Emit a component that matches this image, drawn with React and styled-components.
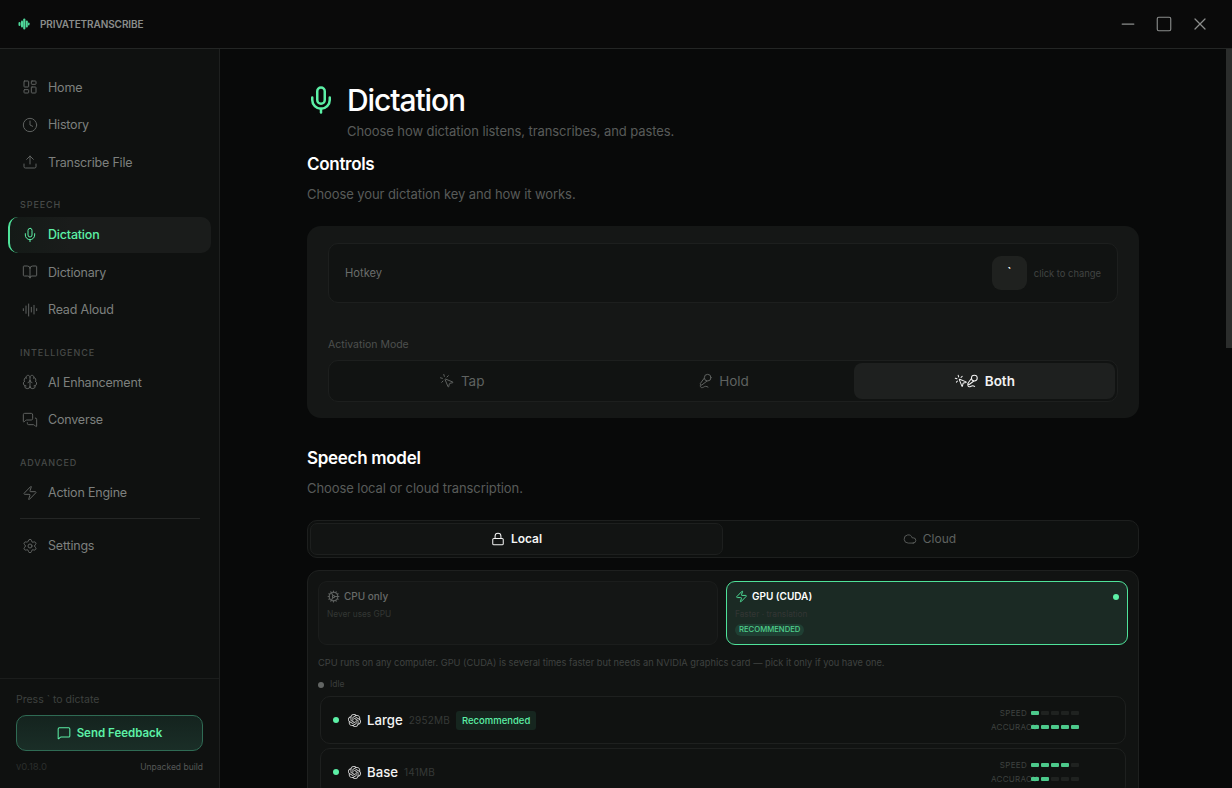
import React from "react";
import styled, { createGlobalStyle } from "styled-components";
import {
  LayoutDashboard, Clock, Upload, Mic, BookOpen, AudioLines, Brain, MessagesSquare, Zap, Settings,
  MessageSquare, Lock, Cloud, Cog, MousePointerClick, MicVocal, Minus, Square, X,
} from "lucide-react";
import { SiOpenai } from "react-icons/si";

const Global = createGlobalStyle`
  * { box-sizing: border-box; }
  html, body { margin: 0; height: 100%; background: #080909; overflow: hidden; }
  body { font-family: Inter, "Noto Sans", sans-serif; color: #fff; }
  #root { height: 100%; }
`;

const Shell = styled.div`
  width: 100%; height: 100vh; display: flex; flex-direction: column; background: #080909;
`;
const TitleBar = styled.header`
  height: 49px; flex: none; display: flex; align-items: center; justify-content: space-between;
  padding: 0 14px 0 18px; background: #0a0a0a; border-bottom: 1px solid #242625;
`;
const Brand = styled.div`
  display: flex; align-items: center; gap: 10px; color: #8a8d8b; font-size: 10px; font-weight: 600; letter-spacing: -0.1px;
  svg { color: #4fd89a; }
`;
const WinControls = styled.div`display: flex;`;
const WinButton = styled.button`
  width: 36px; height: 36px; border: 0; padding: 0; background: none; color: #8b8d8c;
  display: flex; align-items: center; justify-content: center;
`;
const Body = styled.div`flex: 1; min-height: 0; display: flex;`;
const Sidebar = styled.aside`
  width: 220px; flex: none; display: flex; flex-direction: column; background: #0f1110; border-right: 1px solid #1e201f;
`;
const Nav = styled.nav`flex: 1; padding: 20px 8px 0; display: flex; flex-direction: column; gap: 1.5px;`;
const NavItem = styled.div`
  height: 36px; flex: none; display: flex; align-items: center; gap: 10px; padding-left: 12px;
  font-size: 12.5px; font-weight: ${(p) => (p.$active ? 500 : 400)}; letter-spacing: -0.2px;
  color: ${(p) => (p.$active ? "#5cf0a6" : "#7d807e")};
  border-radius: 10px;
  border-left: 2px solid ${(p) => (p.$active ? "#4fe39a" : "transparent")};
  background: ${(p) => (p.$active ? "linear-gradient(90deg,#141a17,#1a1c1b 30%)" : "none")};
  svg { color: ${(p) => (p.$active ? "#5cf0a6" : "#5f6260")}; flex: none; }
`;
const SectionLabel = styled.div`
  font-size: 9px; font-weight: 500; letter-spacing: 0.9px; color: #474a48; padding: 17.5px 0 5.2px 12px; line-height: 11px;
`;
const NavRule = styled.div`height: 1px; background: #242625; margin: 6px 11px 7px 12px; flex: none;`;
const SideFoot = styled.div`
  height: 110px; flex: none; border-top: 1px solid #1b1d1c; padding: 14px 16px 0; display: flex; flex-direction: column;
`;
const PressHint = styled.div`font-size: 10.5px; color: #3e413f; line-height: 13px;`;
const FeedbackButton = styled.button`
  margin-top: 9px; width: 187px; height: 36px; border-radius: 10px; border: 1px solid #2f6b54;
  background: linear-gradient(180deg,#14231e,#1a2e27); color: #5cf0a6; font: 600 11.5px Inter, sans-serif;
  display: flex; align-items: center; justify-content: center; gap: 6px;
`;
const FootMeta = styled.div`
  margin-top: 10px; display: flex; justify-content: space-between; align-items: center; font-size: 8.5px; line-height: 12px; color: #555856;
`;
const Version = styled.span`font-size: 9.5px; color: #2b2e2c;`;

const MainWrap = styled.div`flex: 1; min-width: 0; position: relative; background: #080909;`;
const Main = styled.main`height: 100%; overflow: hidden; padding-right: 6px;`;
const ScrollThumb = styled.div`position: absolute; top: 0; right: 0; width: 6px; height: 299px; background: #2b2d2c;`;
const Content = styled.div`width: 832px; margin: 0 auto; padding-top: 34px;`;
const PageHead = styled.div`display: grid; grid-template-columns: 40px 1fr;`;
const HeadIcon = styled.div`color: #5cf0a6; display: flex; align-items: center; margin-left: -1px;`;
const PageTitle = styled.h1`margin: 0; font-size: 30px; font-weight: 500; line-height: 34px; letter-spacing: -1.1px; color: #fff;`;
const PageSub = styled.p`grid-column: 2; margin: 5px 0 0; font-size: 13px; line-height: 18px; letter-spacing: -0.08px; color: #585b59;`;
const SectionTitle = styled.h2`margin: ${(p) => p.$mt} 0 0; font-size: 17px; font-weight: 600; line-height: 22px; letter-spacing: -0.3px; color: #fff;`;
const SectionDesc = styled.p`margin: 10px 0 0; font-size: 13px; line-height: 18px; letter-spacing: -0.08px; color: #585b59;`;
const ControlsCard = styled.section`
  margin-top: 23px; height: 192px; border-radius: 14px; background: #151716; padding: 17px 21px;
`;
const HotkeyRow = styled.div`
  height: 60px; display: flex; align-items: center; padding: 0 16px; border: 1px solid #1d1f1e; border-radius: 10px; background: #111312;
`;
const HotkeyLabel = styled.span`font-size: 11.2px; color: #6a6d6b; flex: 1;`;
const KeyCap = styled.div`
  width: 35px; height: 34px; border-radius: 9px; background: #1f211f; color: #fff; font-size: 12px; font-weight: 600;
  display: flex; justify-content: center; padding-top: 9px; line-height: 14px;
`;
const KeyHint = styled.span`margin-left: 7px; font-size: 9.4px; color: #414442;`;
const FieldLabel = styled.div`margin-top: 35px; font-size: 10.5px; line-height: 14px; color: #4d504e;`;
const ModeBar = styled.div`
  margin-top: 8px; height: 42px; display: grid; grid-template-columns: repeat(3, 1fr); padding: 2px; border: 1px solid #1d1f1e; border-radius: 10px; background: #111312;
`;
const ModeButton = styled.div`
  display: flex; align-items: center; justify-content: center; gap: 6px; border-radius: 8px; font-size: 13.5px;
  font-weight: ${(p) => (p.$active ? 600 : 400)}; color: ${(p) => (p.$active ? "#f2f2f2" : "#5f6260")};
  background: ${(p) => (p.$active ? "#1e201f" : "none")};
`;
const BothIcons = styled.span`display: inline-flex; svg + svg { margin-left: -3px; }`;
const TabBar = styled.div`
  margin-top: 23px; height: 38px; display: grid; grid-template-columns: 1fr 1fr; padding: 2px; border: 1px solid #1d1f1e; border-radius: 10px; background: #0e100f;
`;
const Tab = styled.div`
  display: flex; align-items: center; justify-content: center; gap: 6px; border-radius: 7px; font-size: 12px; padding-bottom: 1px;
  font-weight: ${(p) => (p.$active ? 600 : 400)}; color: ${(p) => (p.$active ? "#f4f4f4" : "#5f6260")};
  ${(p) => p.$active && "background:#121413; border:1px solid #1d1f1e;"}
`;
const ModelPanel = styled.section`
  margin-top: 12px; border: 1px solid #1e201f; border-radius: 12px; background: #111312; padding: 10px 10px 14px;
`;
const DeviceGrid = styled.div`display: grid; grid-template-columns: 400px 1fr; gap: 8px;`;
const DeviceCard = styled.div`
  height: 64px; border-radius: 9px; padding: 7px 8px; position: relative;
  border: 1px solid ${(p) => (p.$active ? "#4fe39a" : "#1b1d1c")};
  background: ${(p) => (p.$active ? "#1b2a24" : "#141615")};
`;
const DeviceName = styled.div`
  display: flex; align-items: center; gap: 4px; font-size: 10px; line-height: 14px; font-weight: ${(p) => (p.$active ? 600 : 500)};
  color: ${(p) => (p.$active ? "#fff" : "#686b69")};
  svg { color: ${(p) => (p.$active ? "#4fe39a" : "#5f6260")}; }
`;
const DeviceSub = styled.div`margin-top: 6px; font-size: 8.3px; line-height: 11px; color: #333634;`;
const DeviceBadge = styled.span`
  display: block; width: fit-content; margin-top: 4px; padding: 0 4px; height: 12px; line-height: 12px; border-radius: 6px; background: #1f3f33; color: #4fd08d; font-size: 7.7px; font-weight: 500;
`;
const LiveDot = styled.span`position: absolute; top: 12px; right: 8px; width: 6px; height: 6px; border-radius: 50%; background: #5cf0a6;`;
const Note = styled.p`margin: 12px 0 0; font-size: 9.27px; line-height: 12px; color: #3f4240;`;
const IdleLine = styled.div`
  margin-top: 10px; display: flex; align-items: center; gap: 6px; font-size: 8.5px; line-height: 11px; color: #3a3d3b;
  i { width: 6px; height: 6px; border-radius: 50%; background: #626563; }
`;
const ModelList = styled.div`margin: 6px 2px 0; display: flex; flex-direction: column; gap: 4px;`;
const ModelRow = styled.div`
  height: 48px; display: flex; align-items: center; border: 1px solid #1e201f; border-radius: 10px; padding: 0 46px 0 12px; background: #101211;
`;
const Dot = styled.span`width: 6px; height: 6px; border-radius: 50%; background: #5cf0a6; flex: none; margin-right: 9px;`;
const ModelIcon = styled.span`display: flex; color: #dcdcdc; margin-right: 6px;`;
const ModelName = styled.span`font-size: 13.2px; font-weight: 500; color: #f4f4f4; margin-right: 6px;`;
const ModelSize = styled.span`font-size: 10px; color: #363937; letter-spacing: .2px;`;
const RecBadge = styled.span`
  margin-left: 6px; height: 19px; display: flex; align-items: center; padding: 0 6px; border-radius: 3px; background: #16261f; color: #5cf0a6; font-size: 9.5px; font-weight: 500;
`;
const Metrics = styled.div`margin-left: auto; display: flex; flex-direction: column; gap: 3px;`;
const MetricRow = styled.div`display: flex; align-items: center; height: 11px; gap: 4px;`;
const MetricLabel = styled.span`width: 36px; text-align: right; white-space: nowrap; font-size: 8px; letter-spacing: .3px; color: #3f4240;`;
const Pips = styled.div`display: flex; gap: 2px; position: relative;`;
const Pip = styled.span`width: 8px; height: 4px; border-radius: 1px; background: ${(p) => (p.$on ? "#4cc98b" : "#1f2220")};`;

const Logo = () => (
  <svg width="12" height="12" viewBox="0 0 12 12" fill="currentColor">
    <rect x="0.5" y="4" width="2" height="4" rx="1" /><rect x="3" y="2.5" width="2" height="7" rx="1" />
    <rect x="5.2" y="0.5" width="2.2" height="11" rx="1.1" /><rect x="7.8" y="2.5" width="2" height="7" rx="1" />
    <rect x="10" y="4.5" width="1.5" height="3" rx=".75" />
  </svg>
);

const Item = ({ icon: I, label, active }) => (
  <NavItem $active={active}><I size={16} strokeWidth={1.5} />{label}</NavItem>
);

const Meter = ({ label, value }) => (
  <MetricRow>
    <MetricLabel>{label}</MetricLabel>
    <Pips>{[1, 2, 3, 4, 5].map((n) => <Pip key={n} $on={n <= value} />)}</Pips>
  </MetricRow>
);

const Model = ({ name, size, badge, speed, acc }) => (
  <ModelRow>
    <Dot />
    <ModelIcon><SiOpenai size={13} /></ModelIcon>
    <ModelName>{name}</ModelName>
    <ModelSize>{size}</ModelSize>
    {badge && <RecBadge>{badge}</RecBadge>}
    <Metrics>
      <Meter label="SPEED" value={speed} />
      <Meter label="ACCURACY" value={acc} />
    </Metrics>
  </ModelRow>
);

export default function App() {
  return (
    <Shell>
      <Global />
      <TitleBar>
        <Brand><Logo />PRIVATETRANSCRIBE</Brand>
        <WinControls>
          <WinButton><Minus size={20} strokeWidth={1.5} /></WinButton>
          <WinButton><Square size={18} strokeWidth={1.5} /></WinButton>
          <WinButton><X size={20} strokeWidth={1.5} /></WinButton>
        </WinControls>
      </TitleBar>
      <Body>
        <Sidebar>
          <Nav>
            <Item icon={LayoutDashboard} label="Home" />
            <Item icon={Clock} label="History" />
            <Item icon={Upload} label="Transcribe File" />
            <SectionLabel>SPEECH</SectionLabel>
            <Item icon={Mic} label="Dictation" active />
            <Item icon={BookOpen} label="Dictionary" />
            <Item icon={AudioLines} label="Read Aloud" />
            <SectionLabel>INTELLIGENCE</SectionLabel>
            <Item icon={Brain} label="AI Enhancement" />
            <Item icon={MessagesSquare} label="Converse" />
            <SectionLabel>ADVANCED</SectionLabel>
            <Item icon={Zap} label="Action Engine" />
            <NavRule />
            <Item icon={Settings} label="Settings" />
          </Nav>
          <SideFoot>
            <PressHint>Press ` to dictate</PressHint>
            <FeedbackButton><MessageSquare size={14} strokeWidth={1.75} />Send Feedback</FeedbackButton>
            <FootMeta><Version>v0.18.0</Version><span>Unpacked build</span></FootMeta>
          </SideFoot>
        </Sidebar>
        <MainWrap>
          <Main>
            <Content>
              <PageHead>
                <HeadIcon><Mic size={30} strokeWidth={2} /></HeadIcon>
                <PageTitle>Dictation</PageTitle>
                <PageSub>Choose how dictation listens, transcribes, and pastes.</PageSub>
              </PageHead>
              <SectionTitle $mt="13px">Controls</SectionTitle>
              <SectionDesc>Choose your dictation key and how it works.</SectionDesc>
              <ControlsCard>
                <HotkeyRow>
                  <HotkeyLabel>Hotkey</HotkeyLabel>
                  <KeyCap>`</KeyCap>
                  <KeyHint>click to change</KeyHint>
                </HotkeyRow>
                <FieldLabel>Activation Mode</FieldLabel>
                <ModeBar>
                  <ModeButton><MousePointerClick size={16} strokeWidth={1.5} />Tap</ModeButton>
                  <ModeButton><MicVocal size={16} strokeWidth={1.5} />Hold</ModeButton>
                  <ModeButton $active>
                    <BothIcons><MousePointerClick size={14} strokeWidth={1.75} /><MicVocal size={14} strokeWidth={1.75} /></BothIcons>Both
                  </ModeButton>
                </ModeBar>
              </ControlsCard>
              <SectionTitle $mt="29px">Speech model</SectionTitle>
              <SectionDesc>Choose local or cloud transcription.</SectionDesc>
              <TabBar>
                <Tab $active><Lock size={14} strokeWidth={1.75} />Local</Tab>
                <Tab><Cloud size={14} strokeWidth={1.5} />Cloud</Tab>
              </TabBar>
              <ModelPanel>
                <DeviceGrid>
                  <DeviceCard>
                    <DeviceName><Cog size={13} strokeWidth={2} />CPU only</DeviceName>
                    <DeviceSub>Never uses GPU</DeviceSub>
                  </DeviceCard>
                  <DeviceCard $active>
                    <DeviceName $active><Zap size={13} strokeWidth={1.75} />GPU (CUDA)</DeviceName>
                    <DeviceSub>Faster · translation</DeviceSub>
                    <DeviceBadge>RECOMMENDED</DeviceBadge>
                    <LiveDot />
                  </DeviceCard>
                </DeviceGrid>
                <Note>CPU runs on any computer. GPU (CUDA) is several times faster but needs an NVIDIA graphics card — pick it only if you have one.</Note>
                <IdleLine><i />Idle</IdleLine>
                <ModelList>
                  <Model name="Large" size="2952MB" badge="Recommended" speed={1} acc={5} />
                  <Model name="Base" size="141MB" speed={4} acc={2} />
                </ModelList>
              </ModelPanel>
            </Content>
          </Main>
          <ScrollThumb />
        </MainWrap>
      </Body>
    </Shell>
  );
}
